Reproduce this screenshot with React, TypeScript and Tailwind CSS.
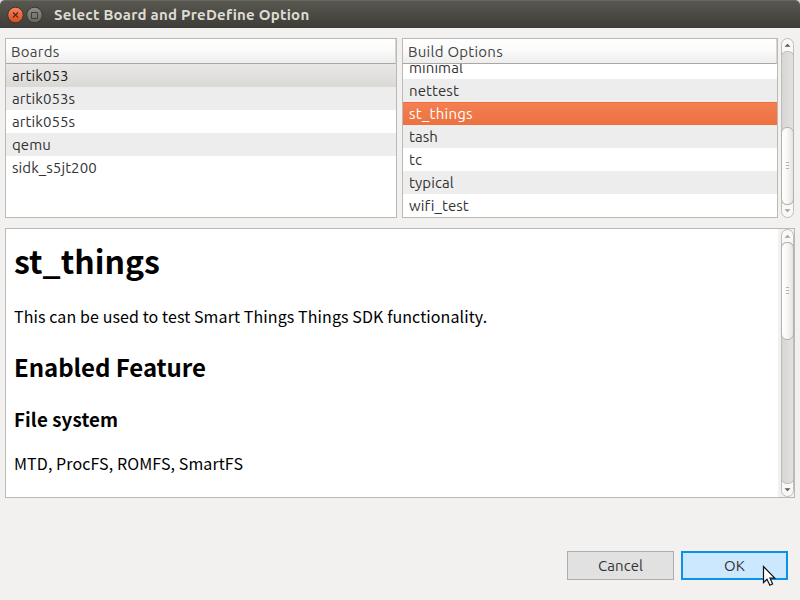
import React from 'react';
import clsx from 'clsx';

const UI_FONT = "font-['Ubuntu','Noto_Sans',sans-serif]";

const boards = ['artik053', 'artik053s', 'artik055s', 'qemu', 'sidk_s5jt200'];
const options = ['minimal', 'nettest', 'st_things', 'tash', 'tc', 'typical', 'wifi_test'];

function ListPanel({ title, rows, selected, focused, width, scrolled }: {
  title: string; rows: string[]; selected: string; focused?: boolean; width: string; scrolled?: boolean;
}) {
  return (
    <section className={clsx('flex h-[180px] shrink-0 flex-col overflow-hidden border border-[#bcb9b5] bg-white', width)}>
      <header className="h-[25px] shrink-0 border-r border-b border-r-[#d8d5d2] border-b-[#a9a7a5] bg-linear-to-b from-white via-[#fafafa] to-[#eeedec] pl-[5px] text-[15px] leading-[25px] tracking-[0.25px] text-[#444]">
        {title}
      </header>
      <ul className={clsx('min-h-0 flex-1 overflow-hidden', scrolled && 'flex flex-col justify-end')}>
        {rows.map((name, i) => (
          <li
            key={name}
            className={clsx(
              'h-[23px] shrink-0 pl-[6px] text-[15px] whitespace-nowrap',
              name === selected && focused ? 'tracking-[0.25px]' : 'tracking-[0.08px]',
              name === selected
                ? focused
                  ? 'border-t border-[#ec6c3c] bg-linear-to-b from-[#f47f50] to-[#ec713f] leading-[21px] text-white'
                  : 'bg-linear-to-b from-[#eae8e7] to-[#dbd9d6] leading-[23px] text-[#1c1c1c]'
                : clsx(i % 2 ? 'bg-[#ededed]' : 'bg-white', 'leading-[23px] text-[#333]'),
            )}
          >
            {name}
          </li>
        ))}
      </ul>
    </section>
  );
}

function Scrollbar({ height, thumbY, thumbH, upActive, downActive }: {
  height: number; thumbY: number; thumbH: number; upActive?: boolean; downActive?: boolean;
}) {
  const id = `sb${height}`;
  const mid = thumbY + thumbH / 2;
  return (
    <svg width="13" height={height} viewBox={`0 0 13 ${height}`} className="block shrink-0">
      <defs>
        <linearGradient id={`${id}t`} x2="1"><stop stopColor="#d6d5d3" /><stop offset="1" stopColor="#e3e2e0" /></linearGradient>
        <linearGradient id={`${id}h`} x2="1"><stop stopColor="#fff" /><stop offset="0.4" stopColor="#faf9f9" /><stop offset="1" stopColor="#e3e2e0" /></linearGradient>
      </defs>
      <rect x="0.5" y="0.5" width="12" height={height - 1} rx="6" fill="#f8f8f7" stroke="#bfbcb8" />
      <path
        d={`M0.5 ${height - 18}V18Q1 13.5 6.5 13.5T12.5 18V${height - 18}Q12 ${height - 13.5} 6.5 ${height - 13.5}T0.5 ${height - 18}Z`}
        fill={`url(#${id}t)`} stroke="#bfbcb8"
      />
      <rect x="0.5" y={thumbY + 0.5} width="12" height={thumbH - 1} rx="5.5" fill={`url(#${id}h)`} stroke="#b4b1ad" />
      {[-4, -1, 2].map((o) => (
        <path key={o} d={`M5 ${Math.floor(mid + o) + 0.5}h3`} stroke="#b5b2ae" />
      ))}
      <path d="M6.5 5.7l3 3.1h-6z" fill={upActive ? '#5a5a5a' : '#a3a19e'} />
      <path d={`M6.5 ${height - 5.7}l3-3.1h-6z`} fill={downActive ? '#5a5a5a' : '#a3a19e'} />
    </svg>
  );
}

function TitleBar() {
  return (
    <div className="h-7 shrink-0 bg-[#dedcd8]">
      <header className="flex h-7 items-center rounded-t-[5px] border-t border-[#69675f] bg-linear-to-b from-[#595850] to-[#3d3c38] pl-[7px]">
        <svg width="36" height="18" viewBox="0 0 36 18" className="block">
          <defs>
            <linearGradient id="close" y2="1" x2="0"><stop stopColor="#f98462" /><stop offset="1" stopColor="#df4a18" /></linearGradient>
            <linearGradient id="max" y2="1" x2="0"><stop stopColor="#919087" /><stop offset="1" stopColor="#656460" /></linearGradient>
          </defs>
          <circle cx="8.5" cy="9" r="7.8" fill="url(#close)" stroke="#373632" />
          <path d="M6 6.5l5 5m0-5l-5 5" stroke="#4b2b20" strokeWidth="1.2" />
          <circle cx="27.5" cy="9" r="7.8" fill="url(#max)" stroke="#373632" />
          <path d="M24.5 6.5h6v6h-6z" fill="none" stroke="#3e3d39" />
        </svg>
        <h1 className="ml-[11px] text-[15px] leading-[27px] font-bold tracking-[0.24px] text-[#dfdbd2]">Select Board and PreDefine Option</h1>
      </header>
    </div>
  );
}

export default function App() {
  return (
    <div className={clsx('relative flex h-[600px] w-[800px] flex-col overflow-hidden bg-[#f2f1ef]', UI_FONT)}>
      <TitleBar />
      <div className="mt-[10px] flex h-[180px] shrink-0 pl-[5px]">
        <ListPanel title="Boards" rows={boards} selected="artik053" width="w-[392px]" />
        <div className="w-[5px] shrink-0" />
        <ListPanel title="Build Options" rows={options} selected="st_things" focused scrolled width="w-[376px]" />
        <div className="ml-[3px]">
          <Scrollbar height={180} thumbY={89} thumbH={78} upActive />
        </div>
      </div>
      <section className="mt-[10px] ml-[5px] flex h-[270px] w-[790px] shrink-0 border border-[#bcb9b5] bg-white">
        <article className="min-w-0 flex-1 pl-2 font-['Noto_Sans_CJK_SC',sans-serif] text-[16px] tracking-[0.1px] whitespace-nowrap text-black">
          <h1 className="mt-[6px] text-[32px] leading-[50px] font-bold tracking-normal">st_things</h1>
          <p className="mt-[19px] leading-[25px]">This can be used to test Smart Things Things SDK functionality.</p>
          <h2 className="mt-[19px] text-[24px] leading-[38px] font-bold tracking-[-0.05px]">Enabled Feature</h2>
          <h3 className="mt-[18px] text-[18.72px] leading-[29px] font-bold tracking-[0.12px]">File system</h3>
          <p className="mt-[18px] leading-[25px]">MTD, ProcFS, ROMFS, SmartFS</p>
        </article>
        <div className="flex w-4 shrink-0 justify-end bg-[#f2f1ef]">
          <Scrollbar height={268} thumbY={13} thumbH={98} downActive />
        </div>
      </section>
      <footer className="mt-[53px] flex h-[29px] justify-end gap-[7px] pr-3 text-[15px] tracking-[0.06px] text-[#333]">
        <button className="w-[107px] border border-[#adadad] bg-[#e1e1e1] pt-[2px]">Cancel</button>
        <button className="w-[107px] border-2 border-[#0a92e8] bg-[#cce8ff] pt-[2px]">OK</button>
      </footer>
      <svg width="16" height="22" viewBox="0 0 16 22" className="absolute top-[565px] left-[762px]">
        <path d="M1.5 1.5V17.5L5 14.2L7.8 20.2L10.6 19L8 13.2H12.8Z" fill="#fff" stroke="#111" strokeWidth="1.2" />
      </svg>
    </div>
  );
}
